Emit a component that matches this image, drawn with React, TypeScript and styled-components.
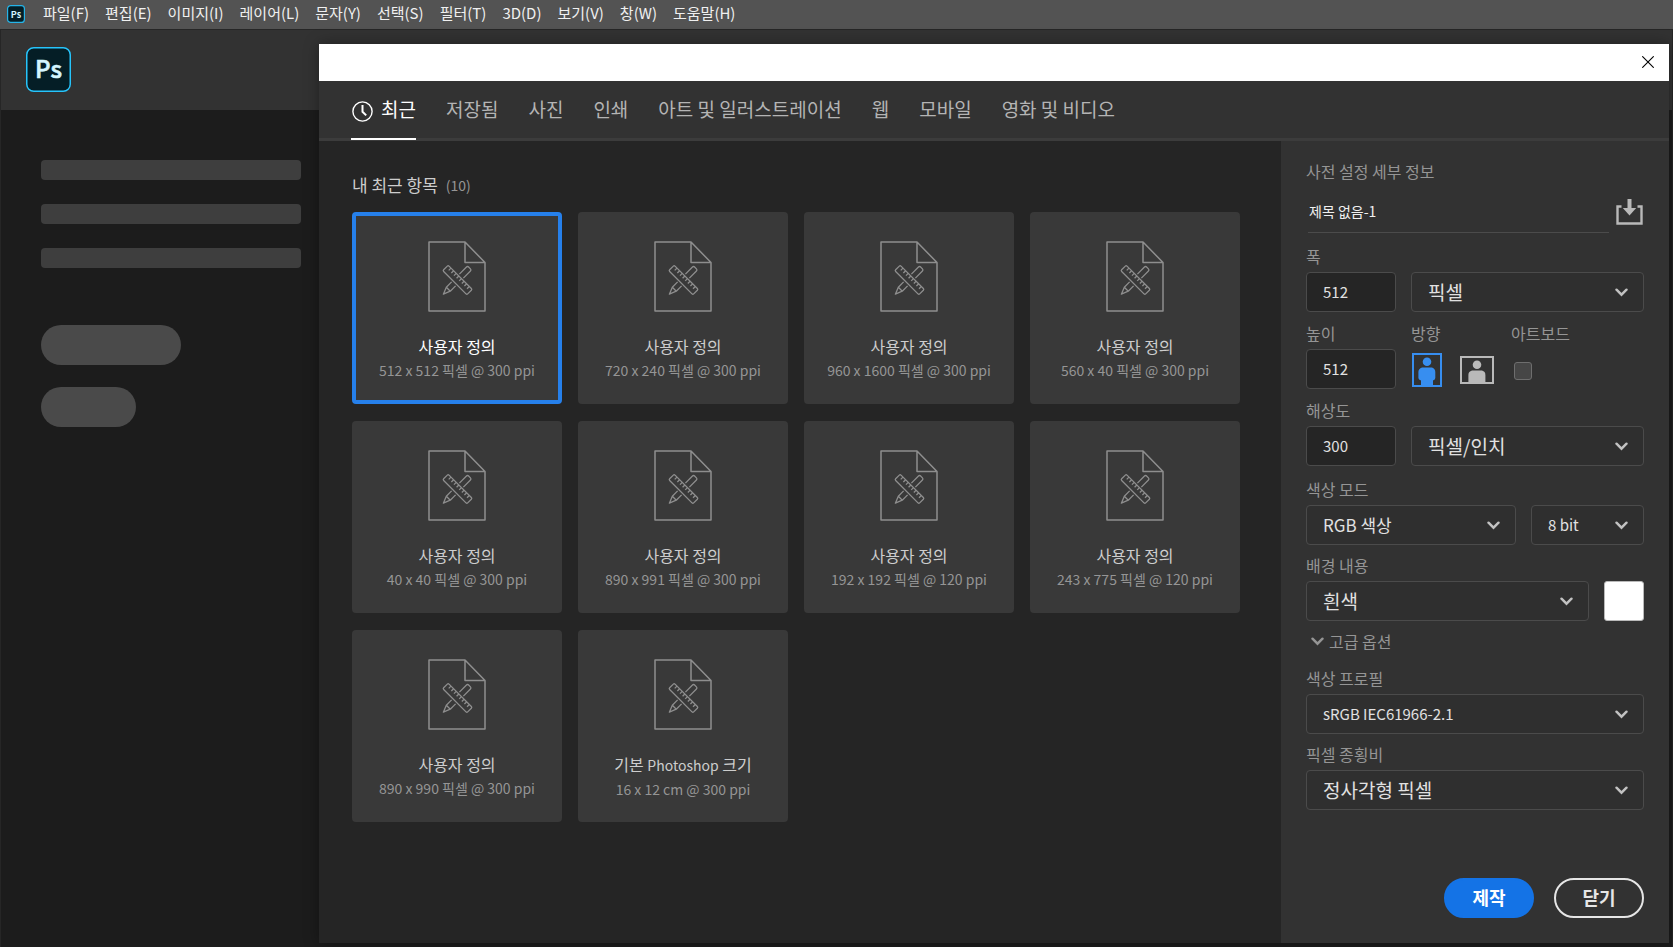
import React, { useState } from "react";
import styled, { createGlobalStyle, css } from "styled-components";

const GlobalStyle = createGlobalStyle`
  *, *::before, *::after { box-sizing: border-box; }
  body {
    margin: 0;
    background: #1c1c1c;
    color: #e1e1e1;
    font-family: "Noto Sans CJK KR", "Noto Sans", sans-serif;
    font-size: 16px;
  }
  button, input, select { font: inherit; color: inherit; }
  button { cursor: pointer; }
`;

const Page = styled.div`
  min-height: 100vh;
  display: flex;
  flex-direction: column;
`;

const MenuBar = styled.header`
  display: flex;
  align-items: center;
  height: 30px;
  padding: 0 7px 2px;
  background: #535353;
  border-bottom: 1px solid #262626;
`;

const MenuList = styled.nav`
  display: flex;
  gap: 16px;
  margin-left: 18px;
  padding-bottom: 2px;
`;

const MenuItem = styled.button`
  padding: 0;
  border: 0;
  background: none;
  color: #f0f0f0;
  font-size: 15px;
  line-height: 24px;
  white-space: nowrap;
`;

/* The start screen and the dialog share one grid cell, the dialog on top. */
const Workspace = styled.div`
  flex: 1;
  display: grid;
  grid-template: minmax(0, 1fr) / minmax(0, 1fr);
`;

const StartScreen = styled.div`
  grid-area: 1 / 1;
  border-left: 1px solid #262626;
  border-right: 1px solid #262626;
`;

const StartHeader = styled.div`
  height: 80px;
  padding: 17px 25px;
  background: #323232;
`;

const Skeletons = styled.div`
  display: flex;
  flex-direction: column;
  gap: 24px;
  padding: 50px 40px;
`;

const SkeletonBar = styled.div`
  width: 260px;
  height: 20px;
  border-radius: 4px;
  background: #3e3e3e;
`;

const SkeletonPills = styled.div`
  display: flex;
  flex-direction: column;
  gap: 22px;
  margin-top: 33px;
`;

const SkeletonPill = styled.div<{ $width: number }>`
  width: ${(p) => p.$width}px;
  height: 40px;
  border-radius: 20px;
  background: #4a4a4a;
`;

const Dialog = styled.section`
  grid-area: 1 / 1;
  z-index: 1;
  display: flex;
  flex-direction: column;
  margin: 14px 4px 4px 319px;
  background: #252525;
  box-shadow: 0 0 14px rgba(0, 0, 0, 0.35);
`;

const TitleBar = styled.div`
  display: flex;
  align-items: center;
  justify-content: flex-end;
  height: 37px;
  padding: 0 15px 2px 0;
  background: #fff;
`;

const IconButton = styled.button`
  display: flex;
  padding: 0;
  border: 0;
  background: none;
`;

const TabBar = styled.div`
  display: flex;
  gap: 30px;
  height: 60px;
  padding-left: 32px;
  background: #323232;
  border-bottom: 3px solid #3c3c3c;
`;

const Tab = styled.button<{ $active: boolean }>`
  display: flex;
  align-items: center;
  gap: 8px;
  height: 59px;
  padding: 0 0 2px;
  border: 0;
  border-bottom: 2px solid ${(p) => (p.$active ? "#fff" : "transparent")};
  background: none;
  color: ${(p) => (p.$active ? "#fff" : "#b4b4b4")};
  font-size: 19px;
  line-height: 28px;
  white-space: nowrap;

  svg { margin-top: 6px; }
`;

const DialogBody = styled.div`
  flex: 1;
  display: grid;
  grid-template-columns: minmax(0, 1fr) 388px;
`;

const Presets = styled.main`
  padding: 32px 33px;
`;

const PresetsHeading = styled.h2`
  display: flex;
  align-items: center;
  gap: 8px;
  margin: 0 0 15px;
  color: #cdcdcd;
  font-size: 17px;
  font-weight: 400;
  line-height: 24px;
`;

const Count = styled.span`
  color: #959595;
  font-size: 14px;
`;

const PresetGrid = styled.div`
  display: grid;
  grid-template-columns: repeat(auto-fill, 210px);
  gap: 17px 16px;
`;

const Card = styled.button<{ $selected: boolean }>`
  display: flex;
  flex-direction: column;
  align-items: center;
  height: 192px;
  padding: 25px 0 0;
  border: 4px solid ${(p) => (p.$selected ? "#2680eb" : "#393939")};
  border-radius: 4px;
  background: #393939;
  color: ${(p) => (p.$selected ? "#fff" : "#cdcdcd")};
`;

const CardTitle = styled.span`
  margin-top: 22px;
  line-height: 24px;
`;

const Latin = styled.span`
  font-size: 14px;
`;

const CardSize = styled.span`
  color: #959595;
  font-size: 14px;
  line-height: 24px;
`;

const Details = styled.form`
  display: flex;
  flex-direction: column;
  padding: 20px 25px 25px;
  background: #323232;
`;

const labelText = css`
  color: #959595;
  font-size: 16px;
  font-weight: 400;
  line-height: 20px;
`;

const DetailsTitle = styled.h3`
  margin: 0;
  ${labelText}
`;

const NameRow = styled.div`
  display: flex;
  align-items: center;
  gap: 7px;
  margin: 11px 1px 13px 2px;
`;

const NameInput = styled.input`
  flex: 1;
  min-width: 0;
  height: 41px;
  padding: 0 0 2px 1px;
  border: 0;
  border-bottom: 1px solid #4b4b4b;
  outline: none;
  background: none;
  color: #f0f0f0;
  font-size: 14px;
`;

const FieldGroup = styled.div<{ $gap: number }>`
  display: flex;
  flex-direction: column;
  gap: ${(p) => p.$gap}px;
  margin-bottom: 13px;
`;

const AdvancedGroup = styled(FieldGroup)`
  margin-top: 17px;
  margin-bottom: 40px;
`;

const FieldRow = styled.div<{ $columns: string }>`
  display: grid;
  grid-template-columns: ${(p) => p.$columns};
  align-items: end;
  column-gap: 15px;
`;

const Field = styled.div`
  display: flex;
  flex-direction: column;
  gap: 6px;
  min-width: 0;
`;

const Label = styled.label`
  ${labelText}
`;

const OptionSet = styled.fieldset`
  display: flex;
  flex-direction: column;
  gap: 6px;
  min-width: 0;
  margin: 0;
  padding: 0;
  border: 0;
`;

const Caption = styled.span`
  ${labelText}
`;

const NumberInput = styled.input`
  width: 100%;
  height: 40px;
  padding: 0 16px 2px;
  border: 1px solid #4b4b4b;
  border-radius: 4px;
  outline: none;
  background: #252525;
  font-size: 15px;
`;

const SelectBox = styled.div`
  display: grid;
  align-items: center;

  svg {
    grid-area: 1 / 1;
    justify-self: end;
    margin-right: 16px;
    pointer-events: none;
  }
`;

const SelectInput = styled.select<{ $size: number }>`
  grid-area: 1 / 1;
  appearance: none;
  width: 100%;
  height: 40px;
  padding: 0 40px 2px 16px;
  border: 1px solid #4b4b4b;
  border-radius: 4px;
  outline: none;
  background: #2f2f2f;
  font-size: ${(p) => p.$size}px;
`;

const Options = styled.div`
  display: flex;
  align-items: center;
  gap: 18px;
  height: 40px;
  padding: 1px 0 0 1px;
`;

const ArtboardOptions = styled(Options)`
  padding: 3px 0 0 3px;
`;

const OrientationOption = styled.label<{ $active: boolean }>`
  display: grid;
  color: ${(p) => (p.$active ? "#378ef0" : "#b9b9b9")};
  cursor: pointer;

  input, svg { grid-area: 1 / 1; }
  input { opacity: 0; width: 100%; height: 100%; margin: 0; }
`;

const CheckBox = styled.input`
  appearance: none;
  width: 18px;
  height: 18px;
  margin: 0;
  border: 1px solid #6e6e6e;
  border-radius: 3px;
  background: #464646;

  &:checked { background: #378ef0; }
`;

const Swatch = styled.button`
  width: 40px;
  height: 40px;
  padding: 0;
  border: 1px solid #b9b9b9;
  border-radius: 3px;
  background: #fff;
`;

const AdvancedToggle = styled.button`
  display: flex;
  align-items: center;
  align-self: flex-start;
  gap: 5px;
  margin: -3px 0 0;
  padding: 0 0 0 5px;
  border: 0;
  background: none;
  ${labelText}
`;

const Actions = styled.div`
  display: flex;
  justify-content: flex-end;
  gap: 20px;
  margin-top: auto;
`;

const ActionButton = styled.button<{ $primary?: boolean }>`
  width: 90px;
  height: 40px;
  padding: 0 0 2px;
  border: 2px solid ${(p) => (p.$primary ? "#1473e6" : "#e6e6e6")};
  border-radius: 20px;
  background: ${(p) => (p.$primary ? "#1473e6" : "transparent")};
  color: ${(p) => (p.$primary ? "#fff" : "#e6e6e6")};
  font-size: 18px;
  font-weight: 700;
  line-height: 24px;
`;

const PsLogo = () => (
  <svg width="45" height="45" viewBox="0 0 45 45" role="img" aria-label="Photoshop">
    <rect x="0.75" y="0.75" width="43.5" height="43.5" rx="7" fill="#051e26" stroke="#26c4fb" strokeWidth="1.5" />
    <text x="22.5" y="31" textAnchor="middle" fill="#d4f5ff" fontSize="24" fontWeight="500" stroke="#d4f5ff" strokeWidth="0.6">Ps</text>
  </svg>
);

const PsLogoSmall = () => (
  <svg width="18" height="18" viewBox="0 0 18 18" aria-hidden="true">
    <rect x="0.6" y="0.6" width="16.8" height="16.8" rx="3" fill="#051e26" stroke="#26b4e8" strokeWidth="1.2" />
    <text x="9" y="12.5" textAnchor="middle" fill="#d4f5ff" fontSize="9" fontWeight="700">Ps</text>
  </svg>
);

const CloseIcon = () => (
  <svg width="12" height="12" viewBox="0 0 12 12" stroke="#000" strokeWidth="1.1" fill="none">
    <path d="M0.3 0.3L11.7 11.7M11.7 0.3L0.3 11.7" />
  </svg>
);

const ClockIcon = () => (
  <svg width="22" height="21" viewBox="0 0 22 21" fill="none" stroke="currentColor">
    <circle cx="11.5" cy="10.5" r="9.6" strokeWidth="1.4" />
    <path d="M11.5 4V10.8L15.2 14.4" strokeWidth="2" />
  </svg>
);

const teeth = [16.5, 20.2, 23.9, 27.6, 31.3, 35, 38.7, 42.4];

const DocumentIcon = () => (
  <svg width="58" height="71" viewBox="0 0 58 71" fill="none" stroke="#8e8e8e" strokeWidth="1.5" strokeLinejoin="round">
    <path d="M37 1H1V70H57V21.5L37 1V21.5H57" />
    <g strokeWidth="1.3">
      <g transform="rotate(-45 29.5 39)">
        <path d="M24 36.2H16.5L9.5 39L16.5 41.8H24M16.5 36.2V41.8M35 36.2H45Q46.5 36.2 46.5 37.7V40.3Q46.5 41.8 45 41.8H35" />
      </g>
      <g transform="rotate(45 29.5 39)">
        <rect x="12.5" y="35.2" width="34" height="7.6" rx="1.2" />
        {teeth.map((x) => (
          <path key={x} d={`M${x} 35.2V38.4`} />
        ))}
      </g>
    </g>
  </svg>
);

const SaveIcon = () => (
  <svg width="27" height="27" viewBox="0 0 27 27" fill="none" stroke="#b9b9b9">
    <path d="M5.5 7.5H1.5V24.5H25.5V7.5H21.5" strokeWidth="2.4" />
    <path d="M13.5 0V10" strokeWidth="4" />
    <path d="M6.8 9H20.2L13.5 16.5Z" fill="#b9b9b9" stroke="none" />
  </svg>
);

const ChevronIcon = ({ color = "#c2c2c2" }: { color?: string }) => (
  <svg width="13" height="9" viewBox="0 0 13 9" fill="none" stroke={color} strokeWidth="2.4" strokeLinecap="round">
    <path d="M1.5 1.7L6.5 6.7L11.5 1.7" />
  </svg>
);

const PortraitIcon = () => (
  <svg width="30" height="34" viewBox="0 0 30 34" fill="currentColor">
    <rect x="1" y="1" width="28" height="32" fill="none" stroke="currentColor" strokeWidth="2" />
    <circle cx="15" cy="8.8" r="4.3" />
    <path d="M10 14.4H20Q23.3 15.5 23.3 19V25Q23.3 27 21 27.4V33H9V27.4Q6.4 27 6.4 25V19Q6.4 15.5 10 14.4Z" />
  </svg>
);

const LandscapeIcon = () => (
  <svg width="34" height="28" viewBox="0 0 34 28" fill="currentColor">
    <rect x="1" y="1" width="32" height="26" fill="none" stroke="currentColor" strokeWidth="2" />
    <circle cx="17" cy="8.8" r="4.3" />
    <path d="M12 14.6H22Q25.4 15.6 25.4 19V27H8.4V19Q8.4 15.6 12 14.6Z" />
  </svg>
);

interface SelectProps {
  id: string;
  value: string;
  size?: number;
  label?: string;
}

const Select = ({ id, value, size = 19, label }: SelectProps) => (
  <SelectBox>
    <SelectInput id={id} $size={size} aria-label={label} defaultValue={value}>
      <option>{value}</option>
    </SelectInput>
    <ChevronIcon />
  </SelectBox>
);

const menus = ["파일(F)", "편집(E)", "이미지(I)", "레이어(L)", "문자(Y)", "선택(S)", "필터(T)", "3D(D)", "보기(V)", "창(W)", "도움말(H)"];

const tabs = ["최근", "저장됨", "사진", "인쇄", "아트 및 일러스트레이션", "웹", "모바일", "영화 및 비디오"];

const custom = "사용자 정의";

const presets: { title: React.ReactNode; size: string }[] = [
  { title: custom, size: "512 x 512 픽셀 @ 300 ppi" },
  { title: custom, size: "720 x 240 픽셀 @ 300 ppi" },
  { title: custom, size: "960 x 1600 픽셀 @ 300 ppi" },
  { title: custom, size: "560 x 40 픽셀 @ 300 ppi" },
  { title: custom, size: "40 x 40 픽셀 @ 300 ppi" },
  { title: custom, size: "890 x 991 픽셀 @ 300 ppi" },
  { title: custom, size: "192 x 192 픽셀 @ 120 ppi" },
  { title: custom, size: "243 x 775 픽셀 @ 120 ppi" },
  { title: custom, size: "890 x 990 픽셀 @ 300 ppi" },
  { title: <>기본 <Latin>Photoshop</Latin> 크기</>, size: "16 x 12 cm @ 300 ppi" },
];

export default function App() {
  const [tab, setTab] = useState(0);
  const [preset, setPreset] = useState(0);
  const [portrait, setPortrait] = useState(true);

  return (
    <Page>
      <GlobalStyle />
      <MenuBar>
        <PsLogoSmall />
        <MenuList>
          {menus.map((name) => (
            <MenuItem key={name} type="button">{name}</MenuItem>
          ))}
        </MenuList>
      </MenuBar>

      <Workspace>
        <StartScreen>
          <StartHeader>
            <PsLogo />
          </StartHeader>
          <Skeletons>
            <SkeletonBar />
            <SkeletonBar />
            <SkeletonBar />
            <SkeletonPills>
              <SkeletonPill $width={140} />
              <SkeletonPill $width={95} />
            </SkeletonPills>
          </Skeletons>
        </StartScreen>

        <Dialog role="dialog">
          <TitleBar>
            <IconButton type="button" aria-label="닫기">
              <CloseIcon />
            </IconButton>
          </TitleBar>

          <TabBar role="tablist">
            {tabs.map((name, i) => (
              <Tab key={name} type="button" role="tab" aria-selected={i === tab} $active={i === tab} onClick={() => setTab(i)}>
                {i === 0 && <ClockIcon />}
                {name}
              </Tab>
            ))}
          </TabBar>

          <DialogBody>
            <Presets>
              <PresetsHeading>
                내 최근 항목 <Count>(10)</Count>
              </PresetsHeading>
              <PresetGrid>
                {presets.map(({ title, size }, i) => (
                  <Card key={size} type="button" $selected={i === preset} onClick={() => setPreset(i)}>
                    <DocumentIcon />
                    <CardTitle>{title}</CardTitle>
                    <CardSize>{size}</CardSize>
                  </Card>
                ))}
              </PresetGrid>
            </Presets>

            <Details onSubmit={(e: React.FormEvent) => e.preventDefault()}>
              <DetailsTitle>사전 설정 세부 정보</DetailsTitle>
              <NameRow>
                <NameInput aria-label="이름" defaultValue="제목 없음-1" />
                <IconButton type="button" aria-label="사전 설정 저장">
                  <SaveIcon />
                </IconButton>
              </NameRow>

              <FieldGroup $gap={11}>
                <FieldRow $columns="90px 1fr">
                  <Field>
                    <Label htmlFor="width">폭</Label>
                    <NumberInput id="width" defaultValue="512" />
                  </Field>
                  <Select id="unit" label="단위" value="픽셀" />
                </FieldRow>
                <FieldRow $columns="90px 85px 1fr">
                  <Field>
                    <Label htmlFor="height">높이</Label>
                    <NumberInput id="height" defaultValue="512" />
                  </Field>
                  <OptionSet>
                    <Caption>방향</Caption>
                    <Options>
                      <OrientationOption $active={portrait}>
                        <input type="radio" name="orientation" aria-label="세로" checked={portrait} onChange={() => setPortrait(true)} />
                        <PortraitIcon />
                      </OrientationOption>
                      <OrientationOption $active={!portrait}>
                        <input type="radio" name="orientation" aria-label="가로" checked={!portrait} onChange={() => setPortrait(false)} />
                        <LandscapeIcon />
                      </OrientationOption>
                    </Options>
                  </OptionSet>
                  <Field>
                    <Label htmlFor="artboard">아트보드</Label>
                    <ArtboardOptions>
                      <CheckBox id="artboard" type="checkbox" />
                    </ArtboardOptions>
                  </Field>
                </FieldRow>
                <FieldRow $columns="90px 1fr">
                  <Field>
                    <Label htmlFor="resolution">해상도</Label>
                    <NumberInput id="resolution" defaultValue="300" />
                  </Field>
                  <Select id="resolution-unit" label="해상도 단위" value="픽셀/인치" />
                </FieldRow>
              </FieldGroup>

              <FieldGroup $gap={10}>
                <FieldRow $columns="210px 1fr">
                  <Field>
                    <Label htmlFor="mode">색상 모드</Label>
                    <Select id="mode" size={17} value="RGB 색상" />
                  </Field>
                  <Select id="depth" label="비트 심도" size={15} value="8 bit" />
                </FieldRow>
                <FieldRow $columns="1fr 40px">
                  <Field>
                    <Label htmlFor="background">배경 내용</Label>
                    <Select id="background" value="흰색" />
                  </Field>
                  <Swatch type="button" aria-label="배경색" />
                </FieldRow>
              </FieldGroup>

              <AdvancedToggle type="button" aria-expanded="true">
                <ChevronIcon color="#959595" />
                고급 옵션
              </AdvancedToggle>

              <AdvancedGroup $gap={10}>
                <Field>
                  <Label htmlFor="profile">색상 프로필</Label>
                  <Select id="profile" size={15} value="sRGB IEC61966-2.1" />
                </Field>
                <Field>
                  <Label htmlFor="aspect">픽셀 종횡비</Label>
                  <Select id="aspect" value="정사각형 픽셀" />
                </Field>
              </AdvancedGroup>

              <Actions>
                <ActionButton type="submit" $primary>제작</ActionButton>
                <ActionButton type="button">닫기</ActionButton>
              </Actions>
            </Details>
          </DialogBody>
        </Dialog>
      </Workspace>
    </Page>
  );
}
